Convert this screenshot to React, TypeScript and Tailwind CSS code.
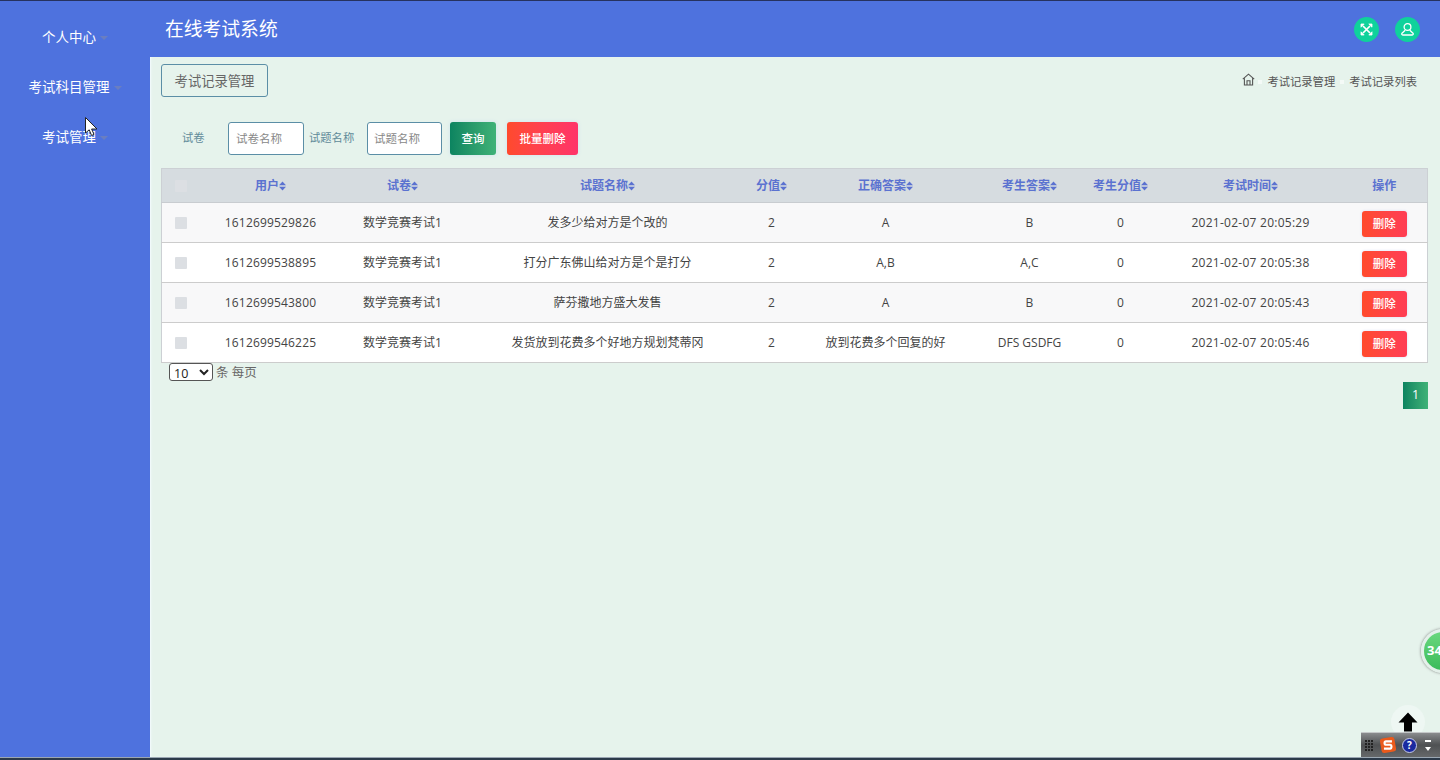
import React from 'react';

const rows = [
  { id: '1612699529826', name: '发多少给对方是个改的', answer: 'A', mine: 'B', time: '2021-02-07 20:05:29' },
  { id: '1612699538895', name: '打分广东佛山给对方是个是打分', answer: 'A,B', mine: 'A,C', time: '2021-02-07 20:05:38' },
  { id: '1612699543800', name: '萨芬撒地方盛大发售', answer: 'A', mine: 'B', time: '2021-02-07 20:05:43' },
  { id: '1612699546225', name: '发货放到花费多个好地方规划梵蒂冈', answer: '放到花费多个回复的好', mine: 'DFS GSDFG', time: '2021-02-07 20:05:46' },
];

const menus = ['个人中心', '考试科目管理', '考试管理'];

const SortIcon = () => (
  <svg width="7" height="10" viewBox="0 0 7 10" className="inline-block align-[-1px]" fill="#5b72d0">
    <path d="M3.5 0.5 7 4.2H0z" />
    <path d="M3.5 9.5 7 5.8H0z" />
  </svg>
);

const Th = ({ label, sort = true }: { label: string; sort?: boolean }) => (
  <th className="font-bold text-[12px] text-[#5b72d0] text-center p-0">
    {label}
    {sort && <SortIcon />}
  </th>
);

const App: React.FC = () => {
  return (
    <div className="relative h-[760px] overflow-hidden flex flex-col bg-[#e6f3ec] text-[12px] text-[#444] font-['Open_Sans','Noto_Sans_CJK_SC',sans-serif]">
      <div className="h-px shrink-0 bg-[#26325f]" />

      <div className="flex flex-1 min-h-0">
        {/* Sidebar */}
        <aside className="w-[150px] shrink-0 bg-[#4e72de] pt-[11px]">
          {menus.map((m) => (
            <div key={m} className="h-[50px] flex items-center justify-center gap-[4px] text-[13.5px] text-white">
              <span>{m}</span>
              <span className="w-0 h-0 mt-[1px] border-x-[4px] border-x-transparent border-t-[4px] border-t-[#6a7ec0]" />
            </div>
          ))}
        </aside>

        <div className="flex-1 flex flex-col min-w-0">
          {/* Header */}
          <header className="h-[56px] shrink-0 bg-[#4e72de] flex items-center justify-between pl-[15px] pr-[20px]">
            <h1 className="text-[18.8px] text-white font-normal">在线考试系统</h1>
            <div className="flex items-center gap-[16px]">
              <div className="w-[25px] h-[25px] rounded-full bg-[#0fd29b] flex items-center justify-center">
                <svg width="15" height="15" viewBox="0 0 15 15" fill="#fff" stroke="#fff" strokeWidth="1.7">
                  <path d="M4 4l7 7M11 4l-7 7" fill="none" />
                  <path d="M2 2h3.2L2 5.2zM13 2H9.8L13 5.2zM13 13H9.8L13 9.8zM2 13h3.2L2 9.8z" strokeWidth="0.8" />
                </svg>
              </div>
              <div className="w-[25px] h-[25px] rounded-full bg-[#0fd29b] flex items-center justify-center">
                <svg width="15" height="15" viewBox="0 0 15 15" fill="none" stroke="#fff" strokeWidth="1.3">
                  <circle cx="7.5" cy="5" r="3.4" />
                  <path d="M5.2 8.2 2 11.2c-.6.7-.3 1.8.8 1.8h9.4c1.1 0 1.4-1.1.8-1.8L9.8 8.2" />
                </svg>
              </div>
            </div>
          </header>

          <main className="flex-1 pl-[11px] pr-[12px] pt-[7px] shadow-[inset_2px_0_2px_-1px_#f4fbff]">
            {/* Title row */}
            <div className="flex items-center justify-between h-[33px]">
              <div className="h-[33px] w-[107px] pt-[2px] flex items-center justify-center rounded-[3px] border border-[#5b8ea6] text-[13.3px] text-[#666]">
                考试记录管理
              </div>
              <div className="flex items-center pt-[3px] text-[11.3px] text-[#555] pr-[11px]">
                <svg width="13" height="13" viewBox="0 0 13 13" fill="none" stroke="#555" strokeWidth="1.1" className="mb-[6px]">
                  <path d="M0.8 6.2 6.5 1.2 12.2 6.2M2.4 5.2V12h8.2V5.2M5 12V7.8h3V12" />
                </svg>
                <span className="w-[4px] h-[4px] ml-[3px] mr-[5px] bg-[#f4faf7]" />
                <span>考试记录管理</span>
                <span className="w-[4px] h-[4px] mx-[5px] bg-[#f4faf7]" />
                <span>考试记录列表</span>
              </div>
            </div>

            {/* Search row */}
            <div className="flex items-center h-[33px] mt-[25px] text-[11.3px] text-[#5f8a99]">
              <span className="w-[67px] pl-[21px]">试卷</span>
              <input
                placeholder="试卷名称"
                className="w-[76px] h-[33px] rounded-[3px] border border-[#5b8ea6] bg-white px-[7px] text-[11.5px] outline-none placeholder:text-[#888]"
              />
              <span className="w-[63px] pl-[5px]">试题名称</span>
              <input
                placeholder="试题名称"
                className="w-[75px] h-[33px] rounded-[3px] border border-[#5b8ea6] bg-white px-[6px] text-[11.5px] outline-none placeholder:text-[#888]"
              />
              <button className="ml-[8px] w-[46px] h-[33px] rounded-[3px] bg-gradient-to-r from-[#0b8460] to-[#3fb277] text-white font-medium text-[11.5px] shadow-[0_0_4px_#cfe3ee]">
                查询
              </button>
              <button className="ml-[11px] w-[71px] h-[33px] rounded-[3px] bg-gradient-to-r from-[#ff4a2c] to-[#ff3369] text-white font-medium text-[11.5px] shadow-[0_0_4px_#cfe3ee]">
                批量删除
              </button>
            </div>

            {/* Table */}
            <table className="w-[1266px] mt-[13px] table-fixed border-collapse border border-[#ccd0d4] bg-white">
              <colgroup>
                <col className="w-[40px]" />
                <col className="w-[138px]" />
                <col className="w-[126px]" />
                <col className="w-[284px]" />
                <col className="w-[44px]" />
                <col className="w-[184px]" />
                <col className="w-[104px]" />
                <col className="w-[78px]" />
                <col className="w-[182px]" />
                <col className="w-[86px]" />
              </colgroup>
              <thead>
                <tr className="h-[34px] bg-[#d6dce0] border-b border-[#c8ccd0]">
                  <th className="p-0">
                    <span className="block w-[12px] h-[12px] ml-[13px] rounded-[1px] bg-[#dcdfe3]" />
                  </th>
                  <Th label="用户" />
                  <Th label="试卷" />
                  <Th label="试题名称" />
                  <Th label="分值" />
                  <Th label="正确答案" />
                  <Th label="考生答案" />
                  <Th label="考生分值" />
                  <Th label="考试时间" />
                  <Th label="操作" sort={false} />
                </tr>
              </thead>
              <tbody>
                {rows.map((r) => (
                  <tr key={r.id} className="h-[40px] border-b border-[#ccc] odd:bg-[#f8f8f9] even:bg-white text-center">
                    <td className="p-0">
                      <span className="block w-[12px] h-[12px] ml-[13px] rounded-[1px] bg-[#dcdfe3]" />
                    </td>
                    <td className="p-0 tracking-[0.17px]">{r.id}</td>
                    <td className="p-0">数学竞赛考试1</td>
                    <td className="p-0">{r.name}</td>
                    <td className="p-0">2</td>
                    <td className="p-0">{r.answer}</td>
                    <td className="p-0">{r.mine}</td>
                    <td className="p-0">0</td>
                    <td className="p-0 tracking-[0.26px]">{r.time}</td>
                    <td className="p-0">
                      <button className="w-[45px] h-[26px] mt-[2px] rounded-[3px] bg-gradient-to-r from-[#ff4a2c] to-[#ff3d55] text-white font-medium text-[11.5px] shadow-[0_0_3px_#d5dcf5] align-middle">
                        删除
                      </button>
                    </td>
                  </tr>
                ))}
              </tbody>
            </table>

            {/* Page size */}
            <div className="flex items-center h-[18px] pl-[8px] text-[12.5px] text-[#666]">
              <select className="w-[44px] h-[18px] rounded-[3px] border border-[#555] bg-white text-[12.5px] text-[#222] leading-none">
                <option>10</option>
              </select>
              <span className="ml-[3px] pt-[2px]">条 每页</span>
            </div>

            {/* Pagination */}
            <div className="flex justify-end mt-[1px]">
              <span className="w-[25px] h-[27px] flex items-center justify-center bg-gradient-to-r from-[#0b8460] to-[#3fb277] text-white text-[12.5px]">
                1
              </span>
            </div>
          </main>
        </div>
      </div>

      <div className="h-[3px] shrink-0 bg-[#2c3a4a] border-t border-[#9aa6b2]" />

      {/* Mouse pointer from the recording */}
      <svg width="13" height="20" viewBox="0 0 13 20" className="absolute left-[85px] top-[117px]">
        <path d="M0.5 0.5V16L4.2 12.8 6.6 18.5 9 17.4 6.6 12H12z" fill="#fff" stroke="#222" strokeWidth="1" />
      </svg>

      {/* Floating ball */}
      <div className="absolute left-[1421px] top-[629px] w-[44px] h-[44px] rounded-full border-[3px] border-[#e4f0ea] bg-gradient-to-b from-[#6ad87e] to-[#39bb5a] shadow-[0_0_3px_#777] flex items-center pl-[3px] text-[13px] font-bold text-white">
        34
      </div>

      {/* Back to top */}
      <div className="absolute left-[1391px] top-[705px] w-[34px] h-[34px] rounded-full bg-[#eef7f3] flex items-start justify-center pt-[7px]">
        <svg width="20" height="20" viewBox="0 0 20 20">
          <path d="M10 0.5 19.5 10.5H14V19.5H6V10.5H0.5z" fill="#000" />
        </svg>
      </div>

      {/* IME toolbar from the recording */}
      <div className="absolute left-[1361px] top-[732px] w-[79px] h-[25px] bg-gradient-to-b from-[#8a8c8e] via-[#4f5153] to-[#66686a] border-t border-[#c5c8c9] flex items-center">
        <div className="grid grid-cols-3 gap-[1px] ml-[4px]">
          {Array.from({ length: 12 }).map((_, i) => (
            <span key={i} className="w-[2px] h-[2px] bg-[#222]" />
          ))}
        </div>
        <svg width="18" height="18" viewBox="0 0 16 16" className="ml-[6px]">
          <rect x="1.5" y="1.5" width="13" height="13" rx="2.5" fill="#ea5a1c" transform="rotate(-10 8 8)" />
          <path d="M11.5 4.8H6.2C4.6 4.8 4.4 7.8 6.2 7.8H9.8C11.6 7.8 11.4 11.2 9.8 11.2H4.4" fill="none" stroke="#fff" strokeWidth="1.9" />
        </svg>
        <div className="ml-[5px] w-[15px] h-[15px] rounded-full bg-[#1a2aa0] border border-[#c8cce8] flex items-center justify-center text-[10px] font-bold text-white leading-none">
          ?
        </div>
        <div className="ml-[8px] flex flex-col items-center gap-[5px]">
          <span className="w-[6px] h-[2px] bg-white" />
          <span className="w-0 h-0 border-x-[3px] border-x-transparent border-t-[4px] border-t-white" />
        </div>
      </div>
    </div>
  );
};

export default App;
